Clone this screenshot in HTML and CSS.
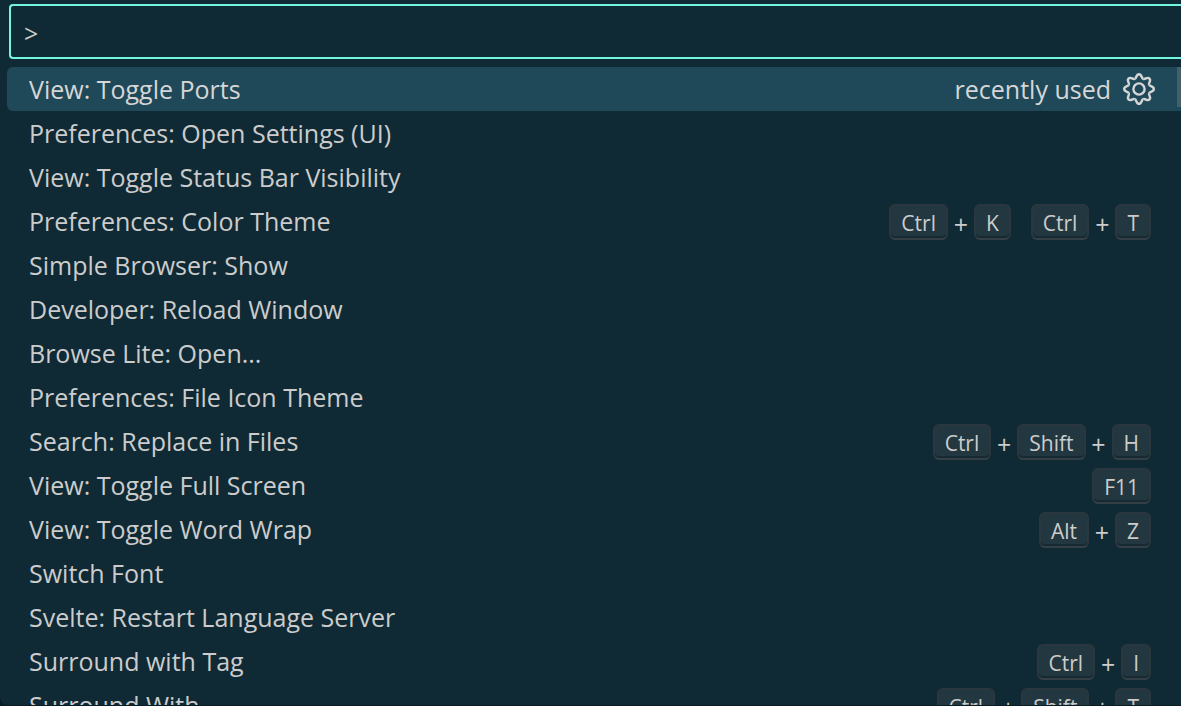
FILE: index.html
```html
<!DOCTYPE html>
<html lang="en">
<head>
<meta charset="utf-8">
<title>Command Palette</title>
<link rel="stylesheet" href="styles.css">
</head>
<body>
<main class="palette">
  <input class="query" type="text" value="&gt;" aria-label="Type the name of a command to run">
  <ul class="commands">
    <li class="command selected">
      <span class="label">View: Toggle Ports</span>
      <span class="hint">recently used</span>
      <button class="configure" type="button" aria-label="Configure Keybinding">
        <svg class="gear" viewBox="-17 -17 34 34" aria-hidden="true">
          <defs><path id="tooth" d="M-4.2-10.2C-2-11.1-3-14.8 0-14.8C3-14.8 2-11.1 4.2-10.2"/></defs>
          <use href="#tooth"/>
          <use href="#tooth" transform="rotate(45)"/>
          <use href="#tooth" transform="rotate(90)"/>
          <use href="#tooth" transform="rotate(135)"/>
          <use href="#tooth" transform="rotate(180)"/>
          <use href="#tooth" transform="rotate(225)"/>
          <use href="#tooth" transform="rotate(270)"/>
          <use href="#tooth" transform="rotate(315)"/>
          <circle r="5.6"/>
        </svg>
      </button>
    </li>
    <li class="command"><span class="label">Preferences: Open Settings (UI)</span></li>
    <li class="command"><span class="label">View: Toggle Status Bar Visibility</span></li>
    <li class="command"><span class="label">Preferences: Color Theme</span>
      <span class="keys"><span class="chord"><kbd>Ctrl</kbd><span class="plus">+</span><kbd>K</kbd></span><span class="chord"><kbd>Ctrl</kbd><span class="plus">+</span><kbd>T</kbd></span></span></li>
    <li class="command"><span class="label">Simple Browser: Show</span></li>
    <li class="command"><span class="label">Developer: Reload Window</span></li>
    <li class="command"><span class="label">Browse Lite: Open...</span></li>
    <li class="command"><span class="label">Preferences: File Icon Theme</span></li>
    <li class="command"><span class="label">Search: Replace in Files</span>
      <span class="keys"><span class="chord"><kbd>Ctrl</kbd><span class="plus">+</span><kbd>Shift</kbd><span class="plus">+</span><kbd>H</kbd></span></span></li>
    <li class="command"><span class="label">View: Toggle Full Screen</span>
      <span class="keys"><span class="chord"><kbd>F11</kbd></span></span></li>
    <li class="command"><span class="label">View: Toggle Word Wrap</span>
      <span class="keys"><span class="chord"><kbd>Alt</kbd><span class="plus">+</span><kbd>Z</kbd></span></span></li>
    <li class="command"><span class="label">Switch Font</span></li>
    <li class="command"><span class="label">Svelte: Restart Language Server</span></li>
    <li class="command"><span class="label">Surround with Tag</span>
      <span class="keys"><span class="chord"><kbd>Ctrl</kbd><span class="plus">+</span><kbd>I</kbd></span></span></li>
    <li class="command"><span class="label">Surround With</span>
      <span class="keys"><span class="chord"><kbd>Ctrl</kbd><span class="plus">+</span><kbd>Shift</kbd><span class="plus">+</span><kbd>T</kbd></span></span></li>
  </ul>
  <div class="scrollbar"></div>
</main>
</body>
</html>
```

FILE: styles.css
```css
* {
  box-sizing: border-box;
}

body {
  margin: 0;
  height: 100vh;
  padding-bottom: 1px;
  overflow: hidden;
  background: #0a1c24;
  color: #cccccc;
  font-family: "Segoe UI", "Open Sans", sans-serif;
  font-size: 25px;
}

.palette {
  position: relative;
  display: flex;
  flex-direction: column;
  gap: 8px;
  height: 100%;
  padding-top: 4px;
  overflow: hidden;
  border-bottom-left-radius: 8px;
  background: #0f2a34;
}

.query {
  flex: none;
  height: 55px;
  margin-left: 9px;
  padding: 2px 13px 0;
  border: 2px solid #73f5dc;
  border-right: 0;
  border-radius: 4px 0 0 4px;
  outline: 0;
  background: #0f2a34;
  color: #cccccc;
  font-family: inherit;
  font-size: 25px;
}

.commands {
  flex: none;
  margin: 0;
  padding: 0 0 0 7px;
  list-style: none;
}

.command {
  display: flex;
  align-items: center;
  height: 44px;
  padding: 0 30px 0 22px;
  line-height: 44px;
  white-space: nowrap;
}

.selected {
  padding-right: 25px;
  border-radius: 6px 0 0 6px;
  background: #1f4959;
  color: #d6d6d6;
}

.label {
  flex: 1;
}

.configure {
  display: flex;
  margin-left: 11px;
  padding: 0;
  border: 0;
  background: none;
  color: inherit;
}

.gear {
  width: 34px;
  height: 34px;
  fill: none;
  stroke: currentColor;
  stroke-width: 2.4;
}

.keys {
  display: flex;
  gap: 20px;
  padding-top: 2px;
}

.chord {
  display: flex;
  align-items: center;
}

kbd {
  height: 36px;
  padding: 0 10px;
  border: 2px solid #2b373e;
  border-bottom-color: #343f46;
  border-radius: 6px;
  background: #22373f;
  box-shadow: inset 0 -2px 0 #172a33;
  font-family: inherit;
  font-size: 21px;
  line-height: 34px;
}

.plus {
  width: 26px;
  padding-top: 4px;
  line-height: 32px;
  text-align: center;
}

.scrollbar {
  position: absolute;
  top: 67px;
  right: 0;
  width: 4px;
  height: 40px;
  background: #465e68;
}
```
